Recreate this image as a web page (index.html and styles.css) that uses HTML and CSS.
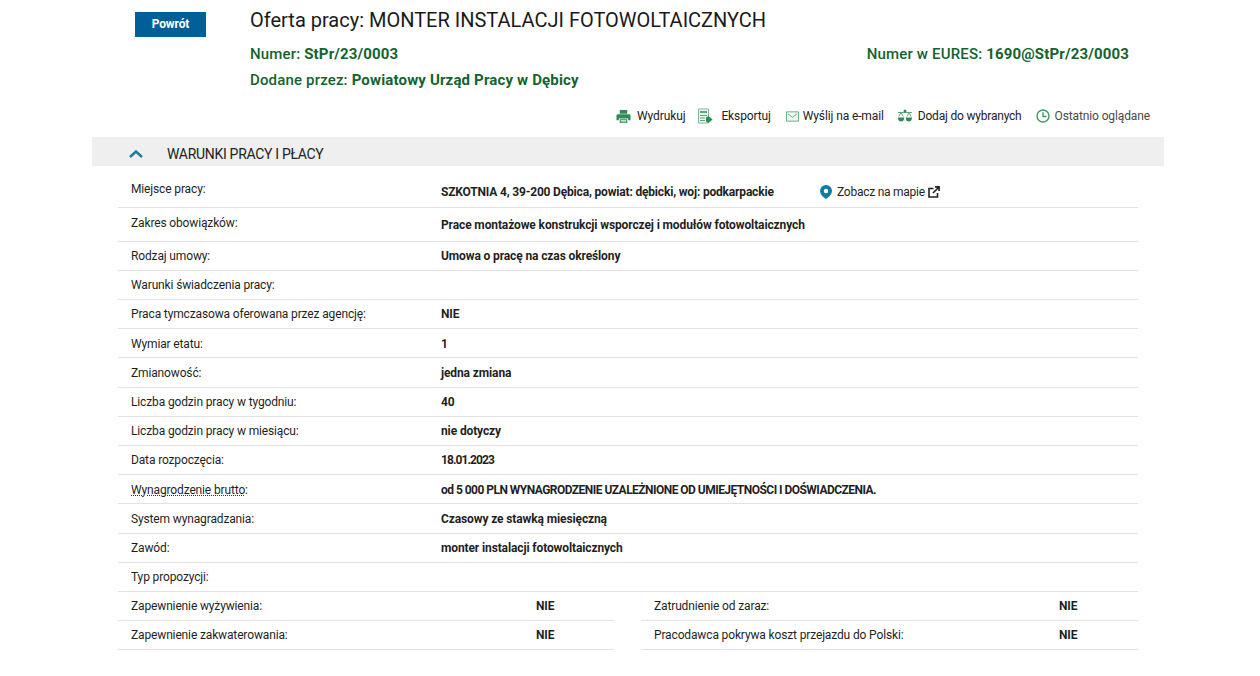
FILE: index.html
```html
<!DOCTYPE html>
<html lang="pl">
<head>
<meta charset="utf-8">
<title>Oferta pracy</title>
<link rel="stylesheet" href="styles.css">
</head>
<body>
<main class="page">
  <header class="head">
    <div class="back-col"><a class="back" href="#">Powrót</a></div>
    <div class="head-main">
      <h1 class="title">Oferta pracy: MONTER INSTALACJI FOTOWOLTAICZNYCH</h1>
      <div class="meta-line first">
        <span>Numer: <b>StPr/23/0003</b></span>
        <span class="eures">Numer w EURES: <b>1690@StPr/23/0003</b></span>
      </div>
      <div class="meta-line">
        <span>Dodane przez: <b>Powiatowy Urząd Pracy w Dębicy</b></span>
      </div>
    </div>
  </header>

  <nav class="tools">
    <a class="tool t-print" href="#">
      <svg class="ico" viewBox="0 0 16 16" width="15" height="15"><path fill="#2e8b57" d="M4 1h8v4H4zM2 5.500h12a1.500 1.500 0 0 1 1.500 1.500v5H13v-2H3v2H.5V7A1.500 1.500 0 0 1 2 5.500zM4 11h8v4H4z"/><path fill="#fff" d="M5 12h6v.8H5zM5 13.400h6v.8H5z"/></svg>
      Wydrukuj</a>
    <a class="tool t-export" href="#">
      <svg class="ico" viewBox="0 0 16 16" width="16" height="16"><path fill="#eef6f0" stroke="#7dbb95" d="M1.500 1h10v14h-10z"/><path fill="#5aa878" d="M3 3h7v2H3zM3 7h7v1H3zM3 9.500h5v1H3zM3 12h5v1H3z"/><path fill="#2e8b57" d="M11.500 8l4 3.500-4 3.500-2.500-1.500V9.500z"/></svg>
      Eksportuj</a>
    <a class="tool t-mail" href="#">
      <svg class="ico" viewBox="0 0 14 11" width="13" height="11"><path fill="#f1f8f3" stroke="#5fa97d" d="M.5.500h13v10H.5z"/><path fill="none" stroke="#5fa97d" d="M2 2.500l5 4 5-4"/></svg>
      Wyślij na e-mail</a>
    <a class="tool t-fav" href="#">
      <svg class="ico" viewBox="0 0 16 14" width="16" height="14"><path fill="none" stroke="#5fa97d" d="M1 3.500h14M4 3.500L1.800 7.500M4 3.500l2.200 4M12 3.500L9.800 7.500M12 3.500l2.200 4"/><circle cx="8" cy="2" r="1.500" fill="#2e8b57"/><path fill="#2e8b57" d="M1 8.500h6.200a3.100 4 0 0 1-6.200 0zM8.800 8.500H15a3.100 4 0 0 1-6.200 0z"/></svg>
      <span class="fav-text">Dodaj do wybranych</span></a>
    <a class="tool t-recent" href="#">
      <svg class="ico" viewBox="0 0 14 14" width="14" height="14"><circle cx="7" cy="7" r="6" fill="none" stroke="#3f9a63" stroke-width="1.400"/><path fill="none" stroke="#3f9a63" stroke-width="1.400" d="M7 3.200V7.500h3.500"/></svg>
      Ostatnio oglądane</a>
  </nav>

  <section class="section">
    <h2 class="section-head">
      <svg class="chev" viewBox="0 0 14 8" width="14" height="8"><path fill="none" stroke="#1c7aa0" stroke-width="2.400" d="M1 7l6-5.500L13 7"/></svg>
      WARUNKI PRACY I PŁACY
    </h2>
    <div class="rows">
      <div class="row r-first"><span class="lab">Miejsce pracy:</span><span class="val v-addr">SZKOTNIA 4, 39-200 Dębica, powiat: dębicki, woj: podkarpackie</span>
        <a class="map" href="#">
          <svg class="pin" viewBox="0 0 12 14" width="12" height="14"><path fill-rule="evenodd" fill="#0f7ba8" d="M6 0a6 6 0 0 1 6 6c0 3-3 6-6 8-3-2-6-5-6-8a6 6 0 0 1 6-6zm0 3.800a2.200 2.200 0 1 0 0 4.400 2.200 2.200 0 0 0 0-4.400z"/></svg>
          <span class="map-text">Zobacz na mapie</span>
          <svg class="ext" viewBox="0 0 12 12" width="12" height="12"><path fill="none" stroke="#222" stroke-width="1.600" d="M9.500 7v4H1V2.500h4.500M7 .9h4.100V5M11 1L5 7"/></svg>
        </a>
      </div>
      <div class="row r-second"><span class="lab">Zakres obowiązków:</span><span class="val">Prace montażowe konstrukcji wsporczej i modułów fotowoltaicznych</span></div>
      <div class="row"><span class="lab">Rodzaj umowy:</span><span class="val">Umowa o pracę na czas określony</span></div>
      <div class="row"><span class="lab">Warunki świadczenia pracy:</span><span class="val"></span></div>
      <div class="row"><span class="lab">Praca tymczasowa oferowana przez agencję:</span><span class="val">NIE</span></div>
      <div class="row"><span class="lab">Wymiar etatu:</span><span class="val">1</span></div>
      <div class="row"><span class="lab">Zmianowość:</span><span class="val">jedna zmiana</span></div>
      <div class="row"><span class="lab">Liczba godzin pracy w tygodniu:</span><span class="val">40</span></div>
      <div class="row"><span class="lab">Liczba godzin pracy w miesiącu:</span><span class="val">nie dotyczy</span></div>
      <div class="row"><span class="lab">Data rozpoczęcia:</span><span class="val v-date">18.01.2023</span></div>
      <div class="row"><span class="lab"><abbr class="hint">Wynagrodzenie brutto</abbr>:</span><span class="val v-caps">od 5 000 PLN WYNAGRODZENIE UZALEŻNIONE OD UMIEJĘTNOŚCI I DOŚWIADCZENIA.</span></div>
      <div class="row"><span class="lab">System wynagradzania:</span><span class="val">Czasowy ze stawką miesięczną</span></div>
      <div class="row"><span class="lab">Zawód:</span><span class="val">monter instalacji fotowoltaicznych</span></div>
      <div class="row"><span class="lab">Typ propozycji:</span><span class="val"></span></div>
      <div class="pairs">
        <div class="pair"><span class="lab">Zapewnienie wyżywienia:</span><span class="val">NIE</span></div>
        <div class="pair"><span class="lab">Zatrudnienie od zaraz:</span><span class="val">NIE</span></div>
        <div class="pair"><span class="lab">Zapewnienie zakwaterowania:</span><span class="val">NIE</span></div>
        <div class="pair"><span class="lab">Pracodawca pokrywa koszt przejazdu do Polski:</span><span class="val">NIE</span></div>
      </div>
    </div>
  </section>
</main>
</body>
</html>
```

FILE: styles.css
```css
* { box-sizing: border-box; }
html, body { margin: 0; padding: 0; background: #fff; }
body { font-family: Roboto, "Noto Sans", sans-serif; color: #1f1f1f; font-size: 12px; height: 676px; overflow: hidden; }
a { color: inherit; text-decoration: none; }
.page { padding: 0 96px 0 92px; }

.head { display: flex; padding-top: 8px; }
.back-col { width: 158px; padding: 4px 0 0 43px; flex: none; }
.back { display: block; width: 71px; height: 25px; line-height: 25px; text-align: center; background: #005f96; color: #fff; font-weight: 700; font-size: 12px; letter-spacing: -.1px; }
.head-main { flex: 1; }
.title { margin: 0; font-size: 20px; font-weight: 400; line-height: 24px; color: #1a1a1a; white-space: nowrap; }
.meta-line { display: flex; justify-content: space-between; color: #14632f; font-size: 15px; font-weight: 500; line-height: 20px; padding-right: 35px; margin-top: 6px; letter-spacing: .16px; }
.meta-line.first { margin-top: 12px; }
.meta-line b { font-weight: 700; }

.tools { display: flex; justify-content: flex-end; align-items: center; height: 20px; margin-top: 16px; padding-right: 14px; color: #222; font-size: 12px; letter-spacing: -.12px; }
.tool { display: flex; align-items: center; gap: 5px; margin-left: 13px; white-space: nowrap; }
.t-print { gap: 6px; }
.t-export { gap: 8px; margin-left: 12px; }
.t-mail { gap: 4px; margin-left: 15px; }
.t-recent { color: #4a4a4a; margin-left: 14px; }
.fav-text { letter-spacing: -.2px; }
.ico { flex: none; }

.section { margin-top: 11px; }
.section-head { margin: 0; height: 29px; background: #efefef; display: flex; align-items: center; padding: 4px 0 0 37px; gap: 24px; font-size: 14px; font-weight: 400; color: #222; letter-spacing: -.3px; }
.rows { margin: 0 26px; }
.row { display: flex; align-items: center; height: 29.23px; border-bottom: 1px solid #e2e2e2; padding: .6px 0 0 13px; }
.r-first { height: 41.5px; padding-top: 0; }
.r-second { height: 34px; padding-top: 0; }
.lab { width: 310px; flex: none; letter-spacing: -.14px; }
.val { font-weight: 700; letter-spacing: -.12px; }
.v-addr { letter-spacing: -.18px; }
.v-date { letter-spacing: -.9px; }
.v-caps { letter-spacing: -.53px; }
.r-first .lab { margin-top: 6px; }
.r-first .val { width: 379px; flex: none; margin-top: 11px; }
.r-second .lab { margin-top: -3px; }
.r-second .val { margin-top: 1px; }
.map { display: flex; align-items: center; gap: 5px; margin-top: 11px; }
.map-text { margin-right: -2px; letter-spacing: -.25px; }
.hint { text-decoration: underline dotted #333; }

.pairs { display: grid; grid-template-columns: 496px 497px; column-gap: 27px; }
.pair { display: flex; align-items: center; height: 29px; border-bottom: 1px solid #e2e2e2; padding: 0 0 0 13px; }
.pair .lab { width: 405px; }
```
